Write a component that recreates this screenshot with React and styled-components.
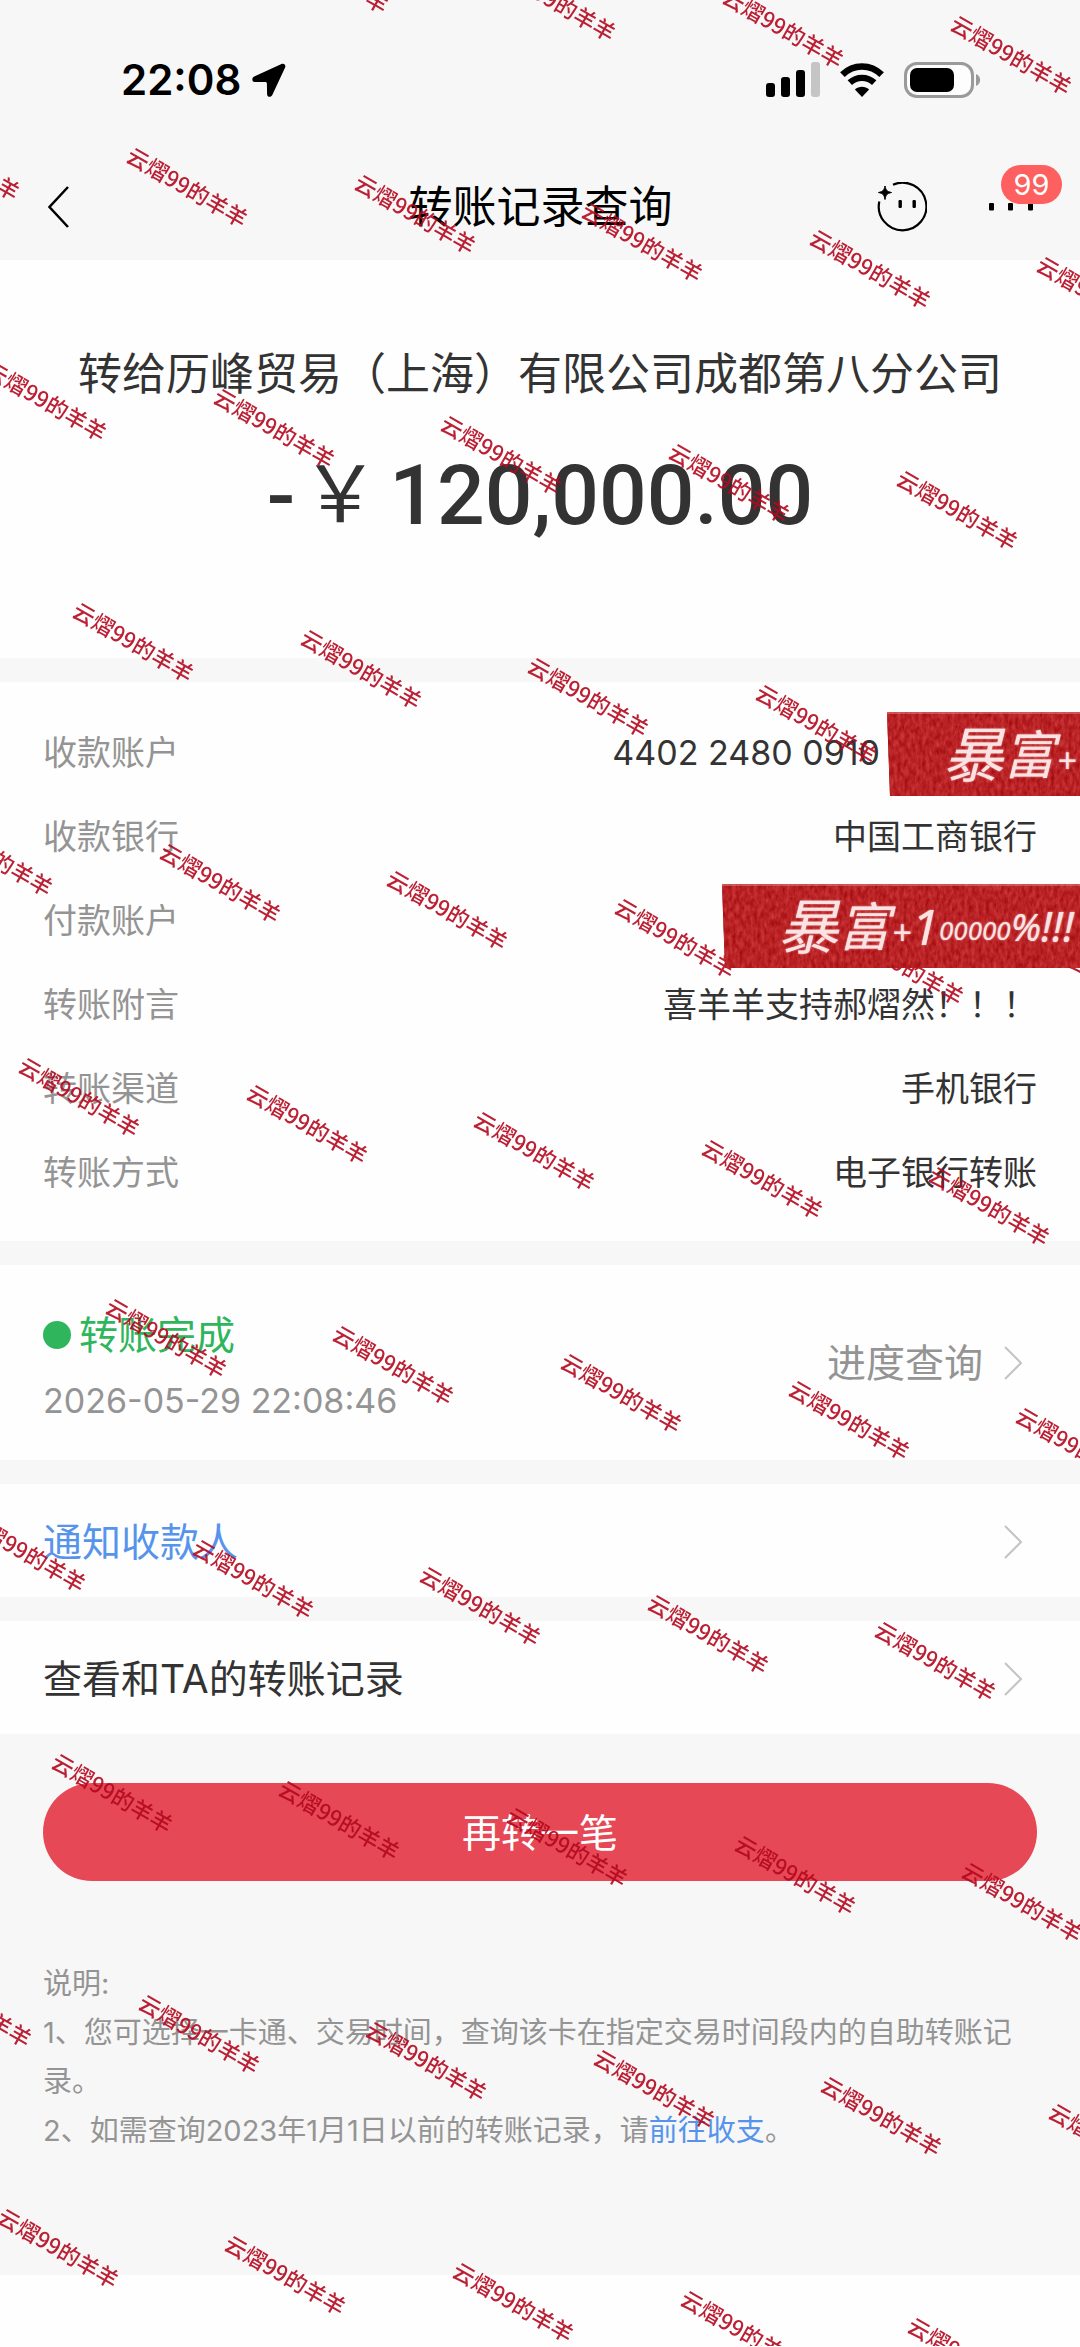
import React from "react";
import styled, { createGlobalStyle } from "styled-components";

const GlobalStyle = createGlobalStyle`
  *, *::before, *::after { box-sizing: border-box; }
  body {
    margin: 0;
    background: #fefefe;
    color: #333;
    font-family: Inter, "Noto Sans CJK SC", sans-serif;
  }
  h1, h2, p, dl, dt, dd { margin: 0; font-weight: 400; }
  button { border: 0; padding: 0; background: none; color: inherit; font: inherit; cursor: pointer; }
  a { color: inherit; text-decoration: none; }
  svg { display: block; flex: none; }
`;

const Page = styled.div`
  position: relative;
  overflow: hidden;
  background: #f7f7f7;
`;

const StatusBar = styled.div`
  display: flex;
  align-items: center;
  justify-content: space-between;
  height: 152px;
  padding: 8px 99px 0 121px;
  color: #000;
`;

const StatusGroup = styled.div`
  display: flex;
  align-items: center;
  gap: ${(p) => p.$gap}px;
`;

const Clock = styled.span`
  font-size: 42px;
  line-height: 48px;
  font-weight: 600;
`;

const NavBar = styled.header`
  display: grid;
  grid-template-columns: 1fr auto 1fr;
  align-items: center;
  height: 108px;
  padding: 2px 47px 0 48px;
  color: #000;
`;

const NavTitle = styled.h1`
  font-size: 44px;
  line-height: 60px;
`;

const NavActions = styled.div`
  display: flex;
  align-items: center;
  justify-content: flex-end;
  gap: 60px;
`;

const MoreButton = styled.button`
  position: relative;
  display: flex;
  align-items: center;
  height: 60px;
`;

const Badge = styled.span`
  position: absolute;
  left: 14px;
  top: -12px;
  width: 61px;
  border-radius: 20px;
  background: #fd605e;
  color: #fff;
  font-size: 29px;
  line-height: 39px;
  text-align: center;
`;

const Card = styled.section`
  position: relative;
  margin-bottom: ${(p) => (p.$last ? 0 : 24)}px;
  background: #fefefe;
`;

const Summary = styled(Card)`
  display: flex;
  flex-direction: column;
  align-items: center;
  padding: 84px 43px 112px;
`;

const Payee = styled.h2`
  font-size: 44px;
  line-height: 60px;
  text-align: center;
`;

const Amount = styled.p`
  display: flex;
  align-items: center;
  margin-top: 42px;
  font-family: Roboto, "Noto Sans CJK SC", sans-serif;
  font-size: 84px;
  line-height: 100px;
  font-weight: 500;
`;

const Yen = styled.span`
  margin: 0 10px 0 6px;
  padding-bottom: 16px;
  font-family: "Noto Sans CJK SC", sans-serif;
  font-size: 78px;
  line-height: 84px;
  font-weight: 400;
`;

const Details = styled(Card)`
  padding: 29px 43px 26px;
`;

const DetailRow = styled.div`
  display: flex;
  align-items: center;
  justify-content: space-between;
  height: 84px;
  font-size: 34px;
  line-height: 48px;
`;

const Label = styled.dt`
  color: #949494;
`;

const Value = styled.dd`
  padding-right: ${(p) => (p.$covered ? 157 : 0)}px;
  color: #333;
`;

const StickerBox = styled.div`
  position: absolute;
  z-index: 3;
  top: ${(p) => p.$top}px;
  right: 0;
  width: ${(p) => p.$width}px;
  height: 84px;
  overflow: hidden;
  clip-path: polygon(0 0, 100% 0, 100% 100%, 3px 100%);
  background: #b42226;
`;

const StickerPaper = styled.svg`
  position: absolute;
  inset: 0;
`;

const StickerWords = styled.div`
  position: relative;
  display: flex;
  align-items: center;
  height: 84px;
  padding-left: 56px;
  color: #fbe3e3;
  font-family: "Noto Sans", "Noto Sans CJK SC", sans-serif;
  font-style: italic;
  text-shadow: 0 0 2px #f3b6b6;
  white-space: nowrap;
`;

const Ink = styled.span`
  padding: ${(p) => p.$drop}px 0 0 ${(p) => p.$space}px;
  font-size: ${(p) => p.$size}px;
  line-height: 60px;
  font-weight: 400;
`;

const LinkRow = styled.button`
  display: flex;
  align-items: center;
  justify-content: space-between;
  width: 100%;
  padding: 30px 58px 27px 43px;
  color: ${(p) => p.$color};
  font-size: 39px;
  line-height: 56px;
  text-align: left;
`;

const Progress = styled(Card)`
  display: flex;
  align-items: center;
  justify-content: space-between;
  height: 195px;
  padding: 0 58px 0 43px;
`;

const ProgressInfo = styled.div`
  display: grid;
  gap: 10px;
  padding-top: 10px;
`;

const State = styled.p`
  display: flex;
  align-items: center;
  gap: 8px;
  color: #2fb65c;
  font-size: 39px;
  line-height: 56px;
`;

const Dot = styled.span`
  width: 28px;
  height: 28px;
  border-radius: 50%;
  background: #2fb65c;
`;

const Time = styled.time`
  color: #949494;
  font-size: 34px;
  line-height: 56px;
`;

const ProgressButton = styled.button`
  display: flex;
  align-items: center;
  gap: 21px;
  color: #949494;
  font-size: 39px;
  line-height: 56px;
`;

const Footer = styled.footer`
  padding: 49px 43px 120px;
`;

const PrimaryButton = styled.button`
  display: block;
  width: 100%;
  padding-top: 2px;
  border-radius: 49px;
  background: #e64856;
  color: #fff;
  font-size: 39px;
  line-height: 96px;
`;

const Notes = styled.div`
  margin-top: 78px;
  color: #949494;
  font-size: 29px;
  line-height: 49px;
`;

const NoteLink = styled.a`
  color: #5694ec;
`;

const HomeArea = styled.div`
  height: 71px;
  background: #fefefe;
`;

const Marks = styled.div`
  position: absolute;
  inset: 0;
  z-index: 2;
  overflow: hidden;
  pointer-events: none;
`;

const Mark = styled.span`
  position: absolute;
  color: #b4081e;
  opacity: 0.9;
  font-family: "Noto Sans CJK SC", sans-serif;
  font-size: 22px;
  line-height: 24px;
  font-weight: 500;
  white-space: nowrap;
  transform: rotate(30deg);
  transform-origin: 12px 12px;
`;

const Chevron = () => (
  <svg width="18" height="34" viewBox="0 0 18 34" fill="none" stroke="#c4c4c4" strokeWidth="2">
    <path d="M1 1 17 17 1 33" />
  </svg>
);

const LocationArrow = () => (
  <svg width="34" height="34" viewBox="0 0 34 34">
    <path d="M29.500 1 2.200 13.600C-.4 14.800-.3 18.700 2.600 18.900L13.200 19.100C14.400 19.100 14.900 19.600 14.900 20.800L15.100 31.400C15.200 34.300 19 34.800 20.300 32.100L33.100 4.500C34.200 2 31.900-.1 29.500 1Z" />
  </svg>
);

const Signal = () => (
  <svg width="54" height="36" viewBox="0 0 54 36">
    <rect x="0" y="21" width="9" height="14" rx="3" />
    <rect x="15" y="15" width="9" height="20" rx="3" />
    <rect x="30" y="8" width="9" height="27" rx="3" />
    <rect x="45" y="0" width="9" height="35" rx="3" fill="#c5c5c5" />
  </svg>
);

const Wifi = () => (
  <svg width="46" height="36" viewBox="0 0 46 36">
    <path d="M3.400 12.700C14.500 1.800 31.500 1.800 42.600 12.700" fill="none" stroke="#000" strokeWidth="6.600" />
    <path d="M10.800 20.700C17.800 14.200 28.200 14.200 35.200 20.700" fill="none" stroke="#000" strokeWidth="6.400" />
    <path d="M15.900 27.600C19.800 23.900 26.200 23.900 30.100 27.600L23 35Z" />
  </svg>
);

const Battery = () => (
  <svg width="77" height="36" viewBox="0 0 77 36">
    <rect x="1.500" y="1.500" width="67" height="33" rx="11.500" fill="#fdfdfd" stroke="#9a9a9a" strokeWidth="3" />
    <rect x="6" y="6" width="44" height="24" rx="7" />
    <path d="M72 12C77.500 14 77.500 22 72 24Z" fill="#9a9a9a" />
  </svg>
);

const BackIcon = () => (
  <svg width="22" height="42" viewBox="0 0 22 42" fill="none" stroke="#000" strokeWidth="2.500">
    <path d="M20 1 1.500 21 20 41" />
  </svg>
);

const FaceIcon = () => (
  <svg width="50" height="50" viewBox="0 0 50 50">
    <path d="M16 2.700A23.800 23.800 0 1 1 2.300 19.500" fill="none" stroke="#000" strokeWidth="2.200" />
    <path d="M8 4C9 8.500 10 9.500 14.500 10.500 10 11.500 9 12.500 8 17.500 7 12.500 6 11.500 1.500 10.500 6 9.500 7 8.500 8 4Z" stroke="#000" />
    <rect x="21.500" y="18" width="3.400" height="8" rx="1.200" />
    <rect x="35.500" y="18" width="3.400" height="8" rx="1.200" />
  </svg>
);

const DotsIcon = () => (
  <svg width="46" height="8" viewBox="0 0 46 8">
    <rect x="2" y="0" width="5" height="7.500" rx="1" />
    <rect x="21" y="0" width="5" height="7.500" rx="1" />
    <rect x="41" y="0" width="5" height="7.500" rx="1" />
  </svg>
);

function Sticker({ id, top, width, children }) {
  return (
    <StickerBox $top={top} $width={width}>
      <StickerPaper width="100%" height="84" aria-hidden="true">
        <filter id={id} x="0" y="0" width="100%" height="100%" colorInterpolationFilters="sRGB">
          <feTurbulence type="fractalNoise" baseFrequency="0.28 0.14" numOctaves="3" seed="4" />
          <feColorMatrix values="0.25 0 0 0 0.6  0.25 0 0 0 0.01  0.25 0 0 0 0.02  0 0 0 0 1" />
        </filter>
        <rect width="100%" height="84" filter={`url(#${id})`} />
        <path d="M0 1H400" stroke="#e08a8a" strokeWidth="2" opacity="0.5" />
      </StickerPaper>
      <StickerWords>{children}</StickerWords>
    </StickerBox>
  );
}

const Wish = () => (
  <>
    <Ink $size={60} $drop={0} $space={0}>暴</Ink>
    <Ink $size={52} $drop={0} $space={0}>富</Ink>
    <Ink $size={34} $drop={12} $space={2}>+</Ink>
  </>
);

const details = [
  { label: "收款账户", value: "4402 2480 0910", covered: true },
  { label: "收款银行", value: "中国工商银行" },
  { label: "付款账户", value: "" },
  { label: "转账附言", value: "喜羊羊支持郝熠然！！！" },
  { label: "转账渠道", value: "手机银行" },
  { label: "转账方式", value: "电子银行转账" },
];

// The marks repeat on a slanted lattice: one step along a line, one step down to the next.
const marks = [];
for (let line = -1; line < 10; line += 1) {
  for (let step = -5; step < 6; step += 1) {
    const x = Math.round(128 + line * 86.8 + step * 227.6);
    const y = Math.round(146 + line * 241.1 + step * 27.3);
    if (x > -115 && x < 1080 && y > -75 && y < 2340) marks.push({ x, y });
  }
}

export default function App() {
  return (
    <>
      <GlobalStyle />
      <Page>
        <StatusBar>
          <StatusGroup $gap={11}>
            <Clock>22:08</Clock>
            <LocationArrow />
          </StatusGroup>
          <StatusGroup $gap={19}>
            <Signal />
            <Wifi />
            <Battery />
          </StatusGroup>
        </StatusBar>
        <NavBar>
          <button type="button" aria-label="返回"><BackIcon /></button>
          <NavTitle>转账记录查询</NavTitle>
          <NavActions>
            <button type="button" aria-label="智能助手"><FaceIcon /></button>
            <MoreButton type="button" aria-label="更多">
              <DotsIcon />
              <Badge>99</Badge>
            </MoreButton>
          </NavActions>
        </NavBar>

        <main>
          <Summary>
            <Payee>转给历峰贸易（上海）有限公司成都第八分公司</Payee>
            <Amount>
              <span>-</span>
              <Yen>￥</Yen>
              <span>120,000.00</span>
            </Amount>
          </Summary>

          <Details>
            <dl>
              {details.map((d) => (
                <DetailRow key={d.label}>
                  <Label>{d.label}</Label>
                  <Value $covered={d.covered}>{d.value}</Value>
                </DetailRow>
              ))}
            </dl>
            <Sticker id="paper-a" top={30} width={193}>
              <Wish />
            </Sticker>
            <Sticker id="paper-b" top={202} width={358}>
              <Wish />
              <Ink $size={50} $drop={0} $space={0}>1</Ink>
              <Ink $size={26} $drop={8} $space={0}>00000</Ink>
              <Ink $size={38} $drop={0} $space={0}>%</Ink>
              <Ink $size={42} $drop={0} $space={0}>!!!</Ink>
            </Sticker>
          </Details>

          <Progress>
            <ProgressInfo>
              <State><Dot />转账完成</State>
              <Time dateTime="2026-05-29T22:08:46">2026-05-29 22:08:46</Time>
            </ProgressInfo>
            <ProgressButton type="button">进度查询<Chevron /></ProgressButton>
          </Progress>

          <Card>
            <LinkRow type="button" $color="#5694ec">通知收款人<Chevron /></LinkRow>
          </Card>
          <Card $last>
            <LinkRow type="button" $color="#333">查看和TA的转账记录<Chevron /></LinkRow>
          </Card>
        </main>

        <Footer>
          <PrimaryButton type="button">再转一笔</PrimaryButton>
          <Notes>
            <p>说明:</p>
            <p>1、您可选择一卡通、交易时间，查询该卡在指定交易时间段内的自助转账记录。</p>
            <p>2、如需查询2023年1月1日以前的转账记录，请<NoteLink href="#records">前往收支</NoteLink>。</p>
          </Notes>
        </Footer>
        <HomeArea />

        <Marks aria-hidden="true">
          {marks.map((m) => (
            <Mark key={`${m.x},${m.y}`} style={{ left: m.x, top: m.y }}>云熠99的羊羊</Mark>
          ))}
        </Marks>
      </Page>
    </>
  );
}
